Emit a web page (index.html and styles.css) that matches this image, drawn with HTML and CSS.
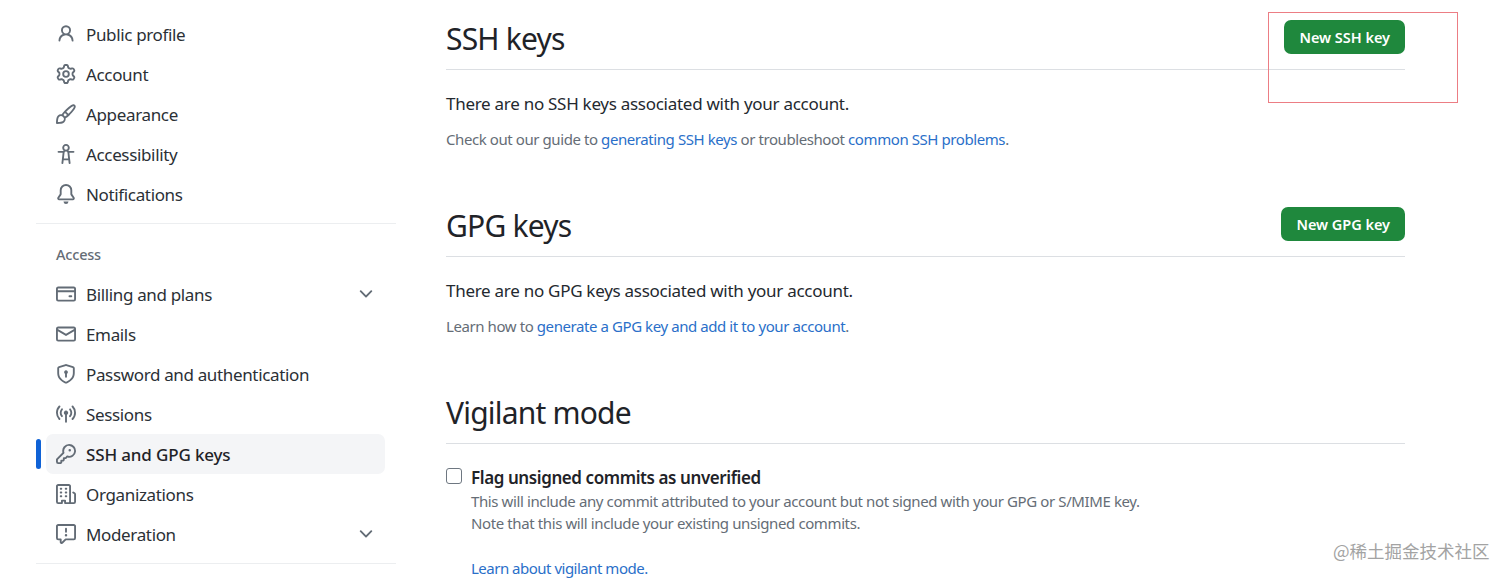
FILE: index.html
```html
<!DOCTYPE html>
<html lang="en">
<head>
    <meta charset="UTF-8">
    <meta name="viewport" content="width=device-width, initial-scale=1.0">
    <title>SSH and GPG keys</title>
    <link rel="stylesheet" href="styles.css">
</head>
<body>
    <div class="page">
        <nav class="sidebar">
            <ul class="nav-list">
                <li class="nav-item">
                    <svg class="icon" viewBox="0 0 16 16"><path d="M10.561 8.073a6.005 6.005 0 0 1 3.432 5.142.75.75 0 1 1-1.498.07 4.5 4.5 0 0 0-8.99 0 .75.75 0 0 1-1.498-.07 6.004 6.004 0 0 1 3.431-5.142 3.999 3.999 0 1 1 5.123 0ZM10.5 5a2.5 2.5 0 1 0-5 0 2.5 2.5 0 0 0 5 0Z"/></svg>
                    <span>Public profile</span>
                </li>
                <li class="nav-item">
                    <svg class="icon" viewBox="0 0 16 16"><path d="M8 0a8.2 8.2 0 0 1 .701.031C9.444.095 9.99.645 10.16 1.29l.288 1.107c.018.066.079.158.212.224.231.114.454.243.668.386.123.082.233.09.299.071l1.103-.303c.644-.176 1.392.021 1.82.63.27.385.506.792.704 1.218.315.675.111 1.422-.364 1.891l-.814.806c-.049.048-.098.147-.088.294.016.257.016.515 0 .772-.01.147.038.246.088.294l.814.806c.475.469.679 1.216.364 1.891a7.977 7.977 0 0 1-.704 1.217c-.428.61-1.176.807-1.82.63l-1.102-.302c-.067-.019-.177-.011-.3.071a5.909 5.909 0 0 1-.668.386c-.133.066-.194.158-.211.224l-.29 1.106c-.168.646-.715 1.196-1.458 1.26a8.006 8.006 0 0 1-1.402 0c-.743-.064-1.289-.614-1.458-1.26l-.289-1.106c-.018-.066-.079-.158-.212-.224a5.738 5.738 0 0 1-.668-.386c-.123-.082-.233-.09-.299-.071l-1.103.303c-.644.176-1.392-.021-1.82-.63a8.12 8.12 0 0 1-.704-1.218c-.315-.675-.111-1.422.363-1.891l.815-.806c.05-.048.098-.147.088-.294a6.214 6.214 0 0 1 0-.772c.01-.147-.038-.246-.088-.294l-.815-.806C.635 6.045.431 5.298.746 4.623a7.92 7.92 0 0 1 .704-1.217c.428-.61 1.176-.807 1.82-.63l1.102.302c.067.019.177.011.3-.071.214-.143.437-.272.668-.386.133-.066.194-.158.211-.224l.29-1.106C6.009.645 6.556.095 7.299.03 7.53.01 7.764 0 8 0Zm-.571 1.525c-.036.003-.108.036-.137.146l-.289 1.105c-.147.561-.549.967-.998 1.189-.173.086-.34.183-.5.29-.417.278-.97.423-1.529.27l-1.103-.303c-.109-.03-.175.016-.195.045-.22.312-.412.644-.573.99-.014.031-.021.11.059.19l.815.806c.411.406.562.957.53 1.456a4.709 4.709 0 0 0 0 .582c.032.499-.119 1.05-.53 1.456l-.815.806c-.081.08-.073.159-.059.19.162.346.353.677.573.989.02.03.085.076.195.046l1.102-.303c.56-.153 1.113-.008 1.53.27.161.107.328.204.501.29.447.222.85.629.997 1.189l.289 1.105c.029.109.101.143.137.146a6.6 6.6 0 0 0 1.142 0c.036-.003.108-.036.137-.146l.289-1.105c.147-.561.549-.967.998-1.189.173-.086.34-.183.5-.29.417-.278.97-.423 1.529-.27l1.103.303c.109.029.175-.016.195-.045.22-.313.411-.644.573-.99.014-.031.021-.11-.059-.19l-.815-.806c-.411-.406-.562-.957-.53-1.456a4.709 4.709 0 0 0 0-.582c-.032-.499.119-1.05.53-1.456l.815-.806c.081-.08.073-.159.059-.19a6.464 6.464 0 0 0-.573-.989c-.02-.03-.085-.076-.195-.046l-1.102.303c-.56.153-1.113.008-1.53-.27a4.44 4.44 0 0 0-.501-.29c-.447-.222-.85-.629-.997-1.189l-.289-1.105c-.029-.11-.101-.143-.137-.146a6.6 6.6 0 0 0-1.142 0ZM11 8a3 3 0 1 1-6 0 3 3 0 0 1 6 0ZM9.5 8a1.5 1.5 0 1 0-3.001.001A1.5 1.5 0 0 0 9.5 8Z"/></svg>
                    <span>Account</span>
                </li>
                <li class="nav-item">
                    <svg class="icon" viewBox="0 0 16 16"><path d="M11.134 1.535c.7-.509 1.416-.942 2.076-1.155.649-.21 1.463-.267 2.069.34.603.601.568 1.411.368 2.07-.202.668-.624 1.39-1.125 2.096-1.011 1.424-2.496 2.987-3.775 4.249-1.098 1.084-2.132 1.839-3.04 2.3a3.744 3.744 0 0 1-1.055 3.217c-.431.431-1.065.691-1.657.861-.614.177-1.294.287-1.914.357A21.151 21.151 0 0 1 .797 16H.743l.007-.75H.749L.742 16a.75.75 0 0 1-.743-.742l.743-.008-.742.007v-.054a21.25 21.25 0 0 1 .13-2.284c.067-.647.187-1.287.358-1.914.17-.591.43-1.226.86-1.657a3.746 3.746 0 0 1 3.227-1.054c.466-.893 1.225-1.907 2.314-2.982 1.271-1.255 2.833-2.75 4.245-3.777ZM1.62 13.089c-.051.464-.086.929-.104 1.395.466-.018.932-.053 1.396-.104a10.511 10.511 0 0 0 1.668-.309c.526-.151.856-.325 1.011-.48a2.25 2.25 0 1 0-3.182-3.182c-.155.155-.329.485-.48 1.01a10.515 10.515 0 0 0-.309 1.67Zm10.396-10.34c-1.224.89-2.605 2.189-3.822 3.384l1.718 1.718c1.21-1.205 2.51-2.597 3.387-3.833.47-.662.78-1.227.912-1.662.134-.444.032-.551.009-.575h-.001V1.78c-.014-.014-.113-.113-.548.027-.432.14-.995.462-1.655.942Zm-4.832 7.266-.001.001a9.859 9.859 0 0 0 1.63-1.142L7.155 7.216a9.7 9.7 0 0 0-1.161 1.607c.482.302.889.71 1.19 1.192Z"/></svg>
                    <span>Appearance</span>
                </li>
                <li class="nav-item">
                    <svg class="icon" viewBox="0 0 16 16"><path d="M9.923 5.302c.063.063.122.129.178.198H14A.75.75 0 0 1 14 7h-3.3l.578 5.163.362 2.997a.75.75 0 0 1-1.49.18L9.868 13H6.132l-.282 2.34a.75.75 0 0 1-1.49-.18l.362-2.997L5.3 7H2a.75.75 0 0 1 0-1.5h3.9a2.54 2.54 0 0 1 .176-.198 3 3 0 1 1 3.847 0ZM9.2 7.073h-.001a1.206 1.206 0 0 0-2.398 0L6.305 11.5h3.39ZM9.5 3a1.5 1.5 0 1 0-3.001.001A1.5 1.5 0 0 0 9.5 3Z"/></svg>
                    <span>Accessibility</span>
                </li>
                <li class="nav-item">
                    <svg class="icon" viewBox="0 0 16 16"><path d="M8 16a2 2 0 0 0 1.985-1.75c.017-.137-.097-.25-.235-.25h-3.5c-.138 0-.252.113-.235.25A2 2 0 0 0 8 16ZM3 5a5 5 0 0 1 10 0v2.947c0 .05.015.098.042.139l1.703 2.555A1.519 1.519 0 0 1 13.482 13H2.518a1.516 1.516 0 0 1-1.263-2.36l1.703-2.554A.255.255 0 0 0 3 7.947Zm5-3.5A3.5 3.5 0 0 0 4.5 5v2.947c0 .346-.102.683-.294.97l-1.703 2.556a.017.017 0 0 0-.003.01l.001.006c0 .002.002.004.004.006l.006.004.007.001h10.964l.007-.001.006-.004.004-.006.001-.007a.017.017 0 0 0-.003-.01l-1.703-2.554a1.745 1.745 0 0 1-.294-.97V5A3.5 3.5 0 0 0 8 1.5Z"/></svg>
                    <span>Notifications</span>
                </li>
            </ul>
            <div class="nav-divider"></div>
            <div class="nav-heading">Access</div>
            <ul class="nav-list">
                <li class="nav-item">
                    <svg class="icon" viewBox="0 0 16 16"><path d="M10.75 9a.75.75 0 0 0 0 1.5h1.5a.75.75 0 0 0 0-1.5h-1.5Z"/><path d="M0 3.75C0 2.784.784 2 1.75 2h12.5c.966 0 1.75.784 1.75 1.75v8.5A1.75 1.75 0 0 1 14.25 14H1.75A1.75 1.75 0 0 1 0 12.25ZM14.5 6.5h-13v5.75c0 .138.112.25.25.25h12.5a.25.25 0 0 0 .25-.25Zm0-2.75a.25.25 0 0 0-.25-.25H1.75a.25.25 0 0 0-.25.25V5h13Z"/></svg>
                    <span>Billing and plans</span>
                    <svg class="chevron" viewBox="0 0 16 16"><path d="M12.78 5.22a.749.749 0 0 1 0 1.06l-4.25 4.25a.749.749 0 0 1-1.06 0L3.22 6.28a.749.749 0 1 1 1.06-1.06L8 8.939l3.72-3.719a.749.749 0 0 1 1.06 0Z"/></svg>
                </li>
                <li class="nav-item">
                    <svg class="icon" viewBox="0 0 16 16"><path d="M1.75 2h12.5c.966 0 1.75.784 1.75 1.75v8.5A1.75 1.75 0 0 1 14.25 14H1.75A1.75 1.75 0 0 1 0 12.25v-8.5C0 2.784.784 2 1.75 2ZM1.5 12.251c0 .138.112.25.25.25h12.5a.25.25 0 0 0 .25-.25V5.809L8.38 9.397a.75.75 0 0 1-.76 0L1.5 5.809v6.442Zm13-8.181v-.32a.25.25 0 0 0-.25-.25H1.75a.25.25 0 0 0-.25.25v.32L8 7.88Z"/></svg>
                    <span>Emails</span>
                </li>
                <li class="nav-item">
                    <svg class="icon" viewBox="0 0 16 16"><path d="m8.533.133 5.25 1.68A1.75 1.75 0 0 1 15 3.48V7c0 1.566-.32 3.182-1.303 4.682-.983 1.498-2.585 2.813-5.032 3.855a1.697 1.697 0 0 1-1.33 0c-2.447-1.042-4.049-2.357-5.032-3.855C1.32 10.182 1 8.566 1 7V3.48a1.75 1.75 0 0 1 1.217-1.667l5.25-1.68a1.748 1.748 0 0 1 1.066 0Zm-.61 1.429.001.001-5.25 1.68a.251.251 0 0 0-.174.237V7c0 1.36.275 2.666 1.057 3.859.784 1.194 2.121 2.342 4.366 3.298a.196.196 0 0 0 .154 0c2.245-.957 3.582-2.103 4.366-3.297C13.225 9.666 13.5 8.358 13.5 7V3.48a.25.25 0 0 0-.174-.238l-5.25-1.68a.25.25 0 0 0-.153 0ZM9.5 6.5c0 .536-.286 1.032-.75 1.3v2.45a.75.75 0 0 1-1.5 0V7.8A1.5 1.5 0 1 1 9.5 6.5Z"/></svg>
                    <span>Password and authentication</span>
                </li>
                <li class="nav-item">
                    <svg class="icon" viewBox="0 0 16 16"><path d="M8.75 8.582v5.668a.75.75 0 0 1-1.5 0V8.582a1.75 1.75 0 1 1 1.5 0Zm3.983-7.125a.75.75 0 0 1 1.06.026A7.976 7.976 0 0 1 16 7c0 2.139-.84 4.083-2.207 5.517a.75.75 0 1 1-1.086-1.034A6.474 6.474 0 0 0 14.5 7a6.474 6.474 0 0 0-1.793-4.483.75.75 0 0 1 .026-1.06Zm-9.466 0a.75.75 0 0 1 .026 1.06A6.474 6.474 0 0 0 1.5 7a6.47 6.47 0 0 0 1.793 4.483.75.75 0 0 1-1.086 1.034A7.973 7.973 0 0 1 0 7c0-2.139.84-4.083 2.207-5.517a.75.75 0 0 1 1.06-.026Zm8.556 2.321A4.988 4.988 0 0 1 13 7a4.988 4.988 0 0 1-1.177 3.222.75.75 0 1 1-1.146-.967A3.487 3.487 0 0 0 11.5 7c0-.86-.309-1.645-.823-2.255a.75.75 0 0 1 1.146-.967Zm-6.492.958A3.48 3.48 0 0 0 4.5 7a3.48 3.48 0 0 0 .823 2.255.75.75 0 0 1-1.146.967A4.981 4.981 0 0 1 3 7a4.98 4.98 0 0 1 1.188-3.236.75.75 0 1 1 1.143.972Z"/></svg>
                    <span>Sessions</span>
                </li>
                <li class="nav-item active">
                    <svg class="icon" viewBox="0 0 16 16"><path d="M10.5 0a5.499 5.499 0 1 1-1.288 10.848l-.932.932a.749.749 0 0 1-.53.22H7v.75a.749.749 0 0 1-.22.53l-.5.5a.749.749 0 0 1-.53.22H5v.75a.749.749 0 0 1-.22.53l-.5.5a.749.749 0 0 1-.53.22h-2A1.75 1.75 0 0 1 0 14.25v-2c0-.199.079-.389.22-.53l4.932-4.932A5.5 5.5 0 0 1 10.5 0Zm-4 5.5c-.001.431.069.86.205 1.269a.75.75 0 0 1-.181.768L1.5 12.56v1.69c0 .138.112.25.25.25h1.69l.06-.06v-1.19a.75.75 0 0 1 .75-.75h1.19l.06-.06v-1.19a.75.75 0 0 1 .75-.75h1.19l1.023-1.025a.75.75 0 0 1 .768-.18A4 4 0 1 0 6.5 5.5ZM11 6a1 1 0 1 1 0-2 1 1 0 0 1 0 2Z"/></svg>
                    <span>SSH and GPG keys</span>
                </li>
                <li class="nav-item">
                    <svg class="icon" viewBox="0 0 16 16"><path d="M1.75 16A1.75 1.75 0 0 1 0 14.25V1.75C0 .784.784 0 1.75 0h8.5C11.216 0 12 .784 12 1.75v12.5c0 .085-.006.168-.018.25h2.268a.25.25 0 0 0 .25-.25V8.285a.25.25 0 0 0-.111-.208l-1.055-.703a.749.749 0 1 1 .832-1.248l1.055.703c.487.325.779.871.779 1.456v5.965A1.75 1.75 0 0 1 14.25 16h-3.5a.766.766 0 0 1-.197-.026c-.099.017-.2.026-.303.026h-3a.75.75 0 0 1-.75-.75V14h-1v1.25a.75.75 0 0 1-.75.75Zm-.25-1.75c0 .138.112.25.25.25H4v-1.25a.75.75 0 0 1 .75-.75h2.5a.75.75 0 0 1 .75.75v1.25h2.25a.25.25 0 0 0 .25-.25V1.75a.25.25 0 0 0-.25-.25h-8.5a.25.25 0 0 0-.25.25ZM3.75 6h.5a.75.75 0 0 1 0 1.5h-.5a.75.75 0 0 1 0-1.5ZM3 3.75A.75.75 0 0 1 3.75 3h.5a.75.75 0 0 1 0 1.5h-.5A.75.75 0 0 1 3 3.75Zm4 3A.75.75 0 0 1 7.75 6h.5a.75.75 0 0 1 0 1.5h-.5A.75.75 0 0 1 7 6.75ZM7.75 3h.5a.75.75 0 0 1 0 1.5h-.5a.75.75 0 0 1 0-1.5ZM3 9.75A.75.75 0 0 1 3.75 9h.5a.75.75 0 0 1 0 1.5h-.5A.75.75 0 0 1 3 9.75ZM7.75 9h.5a.75.75 0 0 1 0 1.5h-.5a.75.75 0 0 1 0-1.5Z"/></svg>
                    <span>Organizations</span>
                </li>
                <li class="nav-item">
                    <svg class="icon" viewBox="0 0 16 16"><path d="M0 1.75C0 .784.784 0 1.75 0h12.5C15.216 0 16 .784 16 1.75v9.5A1.75 1.75 0 0 1 14.25 13H8.06l-2.573 2.573A1.458 1.458 0 0 1 3 14.543V13H1.75A1.75 1.75 0 0 1 0 11.25Zm1.75-.25a.25.25 0 0 0-.25.25v9.5c0 .138.112.25.25.25h2a.75.75 0 0 1 .75.75v2.19l2.72-2.72a.749.749 0 0 1 .53-.22h6.5a.25.25 0 0 0 .25-.25v-9.5a.25.25 0 0 0-.25-.25Zm7 2.25v2.5a.75.75 0 0 1-1.5 0v-2.5a.75.75 0 0 1 1.5 0ZM9 9a1 1 0 1 1-2 0 1 1 0 0 1 2 0Z"/></svg>
                    <span>Moderation</span>
                    <svg class="chevron" viewBox="0 0 16 16"><path d="M12.78 5.22a.749.749 0 0 1 0 1.06l-4.25 4.25a.749.749 0 0 1-1.06 0L3.22 6.28a.749.749 0 1 1 1.06-1.06L8 8.939l3.72-3.719a.749.749 0 0 1 1.06 0Z"/></svg>
                </li>
            </ul>
            <div class="nav-divider"></div>
        </nav>

        <main class="content">
            <section class="section">
                <div class="section-head">
                    <h2>SSH keys</h2>
                    <button class="btn-new" type="button">New SSH key</button>
                </div>
                <p class="lead">There are no SSH keys associated with your account.</p>
                <p class="note">Check out our guide to <a href="#">generating SSH keys</a> or troubleshoot <a href="#">common SSH problems</a>.</p>
            </section>

            <section class="section">
                <div class="section-head">
                    <h2>GPG keys</h2>
                    <button class="btn-new" type="button">New GPG key</button>
                </div>
                <p class="lead">There are no GPG keys associated with your account.</p>
                <p class="note">Learn how to <a href="#">generate a GPG key and add it to your account</a>.</p>
            </section>

            <section class="section">
                <div class="section-head">
                    <h2>Vigilant mode</h2>
                </div>
                <div class="check-row">
                    <input type="checkbox" id="vigilant" class="check">
                    <div>
                        <label for="vigilant">Flag unsigned commits as unverified</label>
                        <p class="check-note">This will include any commit attributed to your account but not signed with your GPG or S/MIME key.<br>Note that this will include your existing unsigned commits.</p>
                        <a class="check-link" href="#">Learn about vigilant mode.</a>
                    </div>
                </div>
            </section>
        </main>
    </div>

    <div class="red-box"></div>
    <div class="watermark">@稀土掘金技术社区</div>
</body>
</html>
```

FILE: styles.css
```css
* {
    margin: 0;
    padding: 0;
    box-sizing: border-box;
}

html, body {
    height: 580px;
    overflow: hidden;
}

body {
    position: relative;
    background: #fff;
    color: #1f2328;
    font-family: 'Noto Sans', 'Open Sans', sans-serif;
}

a {
    color: #2a6fc9;
    text-decoration: none;
}

.page {
    display: flex;
    align-items: flex-start;
}

/* sidebar */
.sidebar {
    width: 360px;
    margin-left: 36px;
    margin-top: 14px;
}

.nav-list {
    list-style: none;
}

.nav-item {
    position: relative;
    display: flex;
    align-items: center;
    gap: 10px;
    height: 40px;
    margin: 0 11px 0 10px;
    padding: 0 10px;
    border-radius: 7px;
    font-size: 17px;
    letter-spacing: -0.35px;
    color: #2b3036;
}

.nav-item.active {
    background: #f4f5f7;
    font-weight: 500;
    letter-spacing: -0.15px;
    color: #1f2328;
}

.nav-item.active::before {
    content: "";
    position: absolute;
    left: -10px;
    top: 5px;
    width: 5px;
    height: 30px;
    border-radius: 3px;
    background: #0f62d6;
}

.icon {
    width: 20px;
    height: 20px;
    flex: none;
    fill: #636c76;
}

.chevron {
    width: 20px;
    height: 20px;
    margin-left: auto;
    margin-right: -1px;
    fill: #636c76;
}

.nav-divider {
    height: 1px;
    margin-top: 9px;
    background: #eceef0;
}

.nav-heading {
    height: 50px;
    padding: 20px 0 0 20px;
    font-size: 14.5px;
    font-weight: 500;
    letter-spacing: -0.2px;
    color: #656d76;
}

/* main column */
.content {
    width: 959px;
    margin-left: 50px;
}

.section {
    margin-bottom: 38px;
}

.section:last-child {
    margin-bottom: 0;
}

.section-head {
    display: flex;
    align-items: center;
    justify-content: space-between;
    height: 70px;
    padding-top: 8px;
    border-bottom: 1px solid #dcdfe3;
}

h2 {
    font-size: 30px;
    font-weight: 400;
    letter-spacing: -0.8px;
    color: #1f2328;
}

.btn-new {
    padding: 0 15px;
    height: 34px;
    border: 0;
    border-radius: 7px;
    background: #1f883d;
    color: #fff;
    font-family: inherit;
    font-size: 14.5px;
    font-weight: 600;
    letter-spacing: -0.03px;
    align-self: flex-start;
    margin-top: 12px;
}

.lead {
    margin-top: 21.5px;
    font-size: 17px;
    letter-spacing: -0.28px;
    color: #24292f;
}

.note {
    margin-top: 14.5px;
    font-size: 15px;
    letter-spacing: -0.42px;
    color: #656d76;
}

.check-row {
    display: flex;
    gap: 9px;
    margin-top: 22px;
}

.check {
    appearance: none;
    width: 16px;
    height: 16px;
    margin-top: 2px;
    flex: none;
    border: 1.5px solid #6e7781;
    border-radius: 3px;
    background: #fff;
}

.check-row label {
    display: block;
    font-size: 17px;
    font-weight: 600;
    letter-spacing: -0.41px;
    color: #1f2328;
}

.check-note {
    margin-top: 1px;
    font-size: 15px;
    line-height: 22px;
    letter-spacing: -0.39px;
    color: #656d76;
}

.check-link {
    display: block;
    margin-top: 24px;
    font-size: 15px;
    line-height: 20px;
    letter-spacing: -0.5px;
}

/* annotation and watermark painted over the screenshot */
.red-box {
    position: absolute;
    left: 1268px;
    top: 12px;
    width: 190px;
    height: 91px;
    border: 1px solid #ec7d84;
}

.watermark {
    position: absolute;
    left: 1333px;
    top: 538px;
    font-family: 'Noto Sans CJK SC', sans-serif;
    font-size: 17.5px;
    color: #a3a3a3;
    white-space: nowrap;
}
```
